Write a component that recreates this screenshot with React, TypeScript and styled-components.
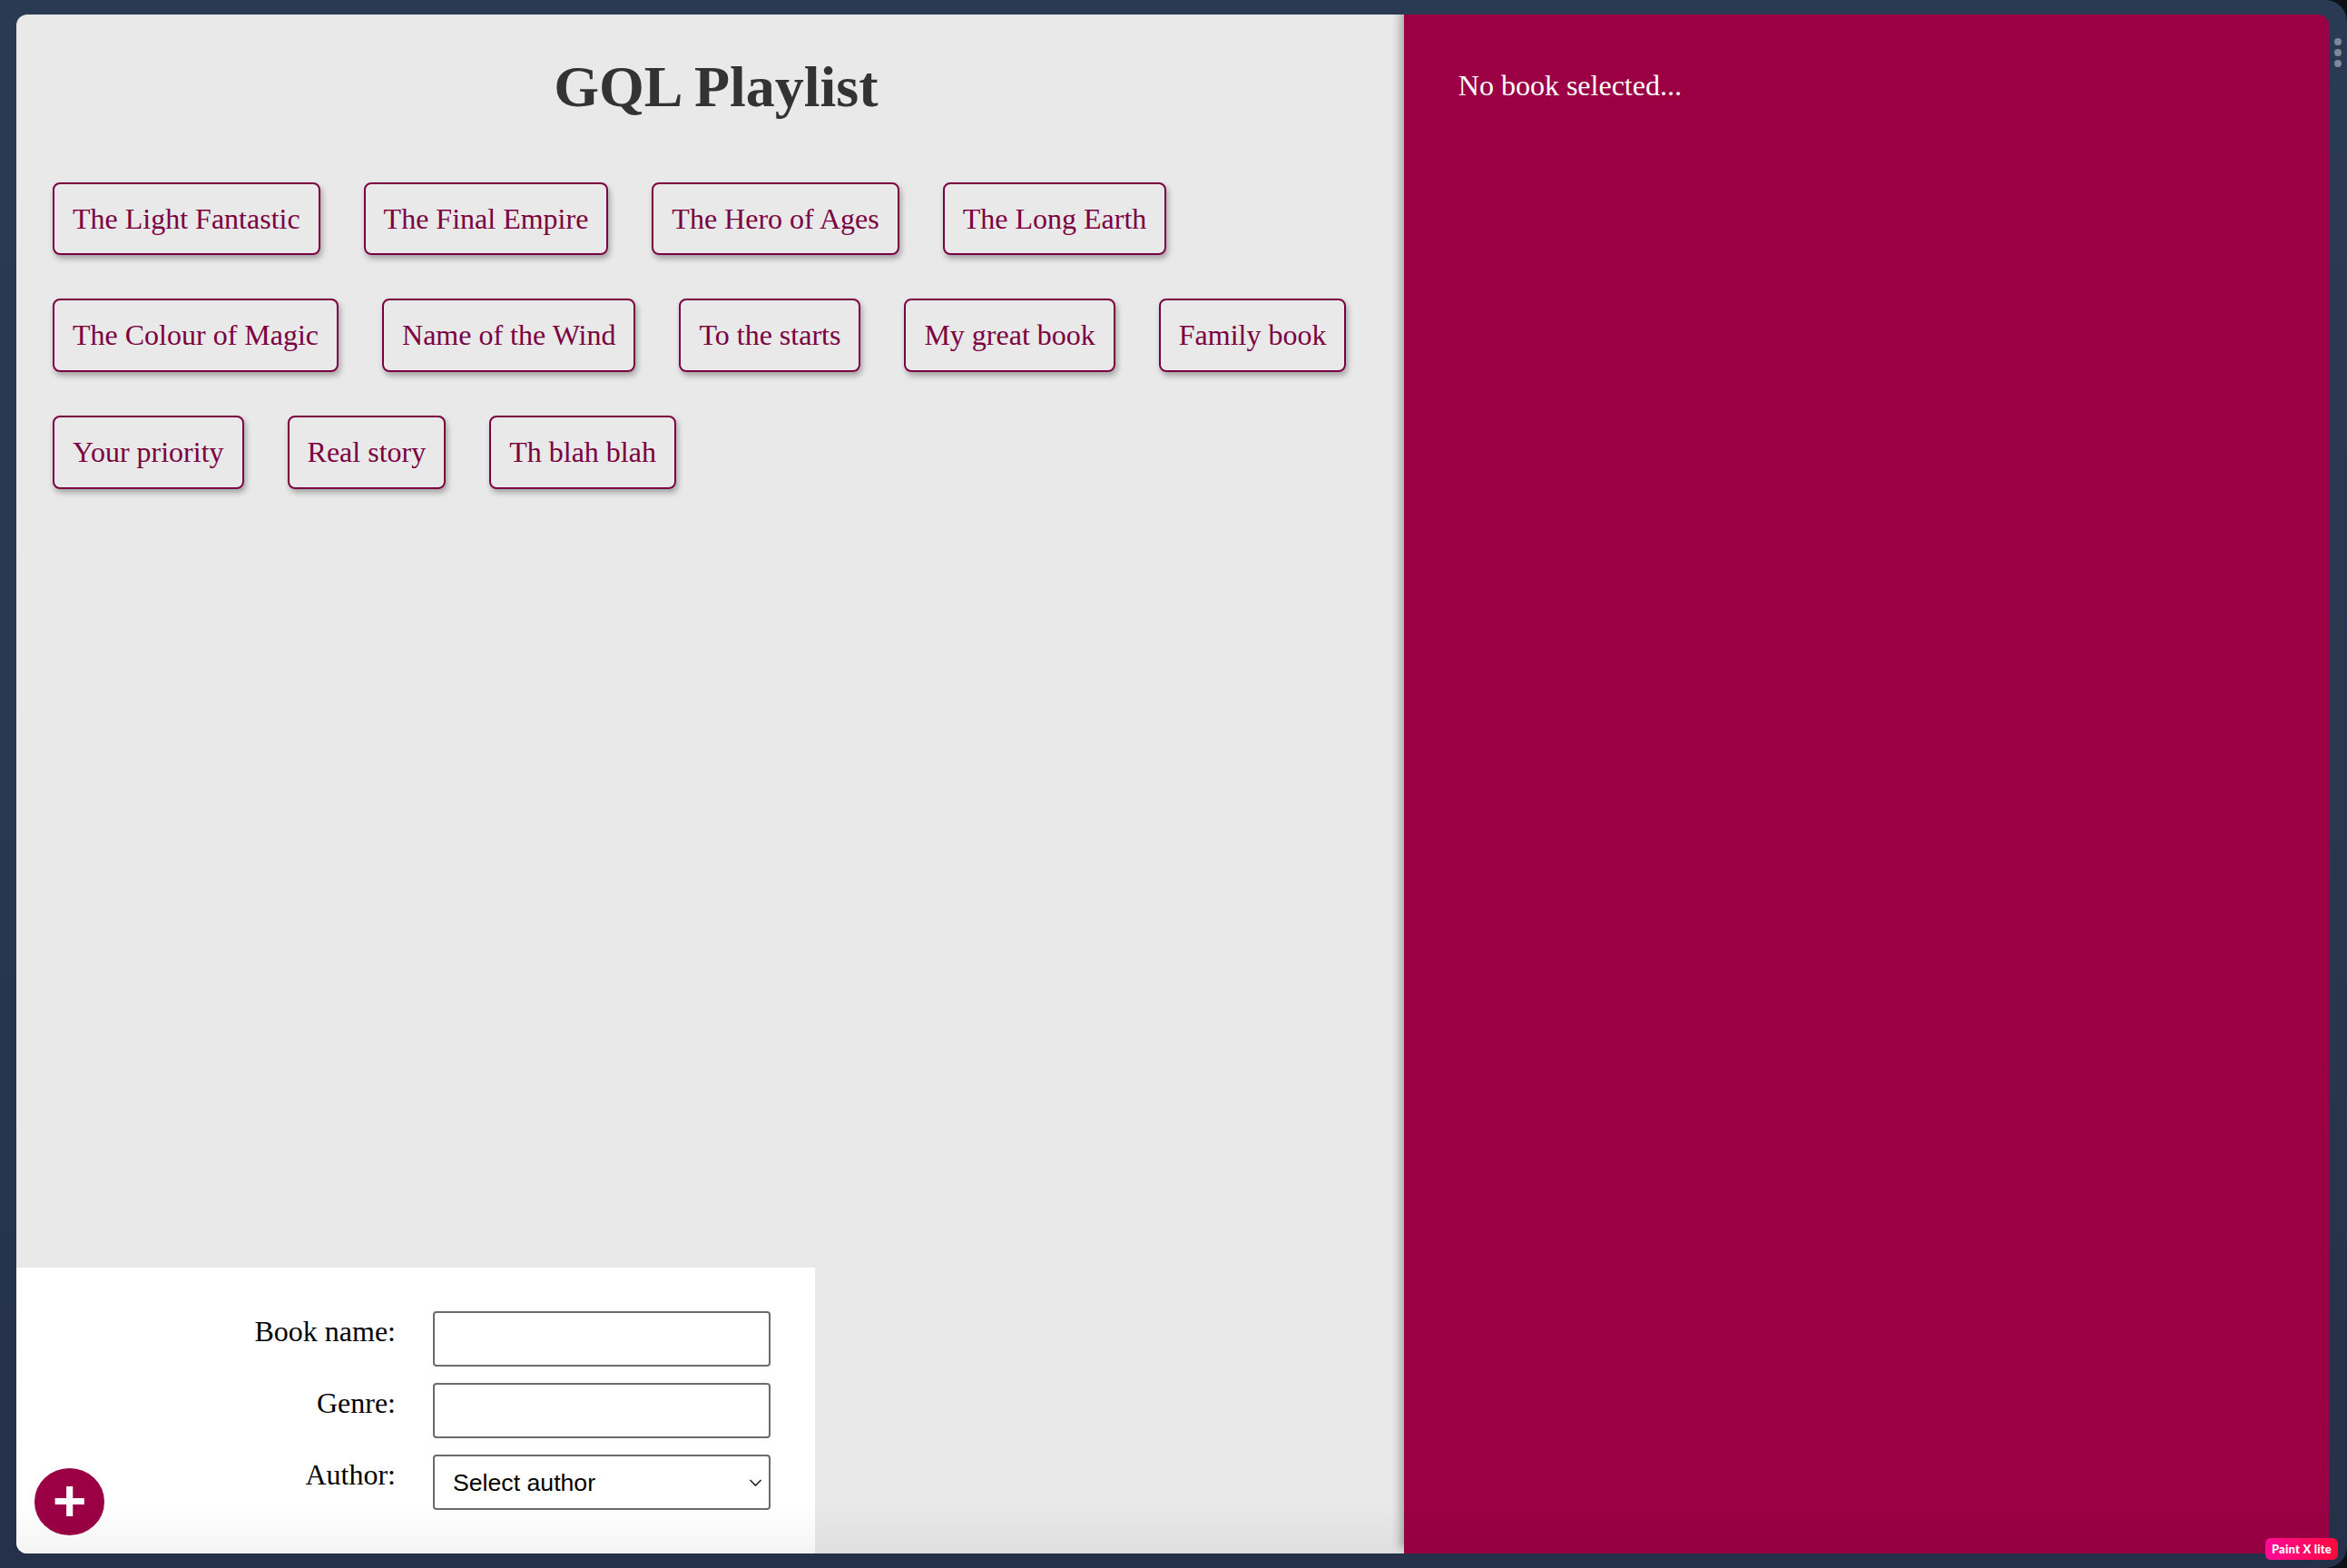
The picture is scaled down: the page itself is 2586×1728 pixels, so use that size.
import React from "react";
import styled, { createGlobalStyle } from "styled-components";

const GlobalStyle = createGlobalStyle`
  html, body {
    margin: 0;
    padding: 0;
    background: #0d1118;
  }
  body {
    font-family: "Liberation Serif", "Times New Roman", serif;
  }
  *, *::before, *::after {
    box-sizing: border-box;
  }
`;

const Frame = styled.div`
  position: relative;
  width: 2586px;
  height: 1728px;
  display: flex;
  padding: 16px 0 16px 18px;
  background: linear-gradient(180deg, #2b3a53 0%, #28364e 60%, #243148 100%);
  border-radius: 0 24px 24px 0;
  overflow: hidden;
`;

const Window = styled.div`
  position: relative;
  width: 2548px;
  height: 1696px;
  flex: none;
  display: flex;
  border-radius: 12px;
  overflow: hidden;

  &::after {
    content: "";
    position: absolute;
    left: 0;
    right: 0;
    bottom: 0;
    height: 56px;
    background: linear-gradient(180deg, rgba(0, 0, 0, 0), rgba(0, 0, 0, 0.045));
    pointer-events: none;
  }
`;

const SideStrip = styled.div`
  flex: 1;
  display: flex;
  flex-direction: column;
  align-items: center;
  padding-top: 26px;
  gap: 4px;
`;

const Dot = styled.span`
  width: 8px;
  height: 8px;
  border-radius: 50%;
  background: #7d889a;
`;

const LeftPanel = styled.main`
  width: 60%;
  display: flex;
  flex-direction: column;
  background: #e9e9e9;
`;

const Content = styled.div`
  padding: 0 3px 0 16px;
`;

const Title = styled.h1`
  margin: 42.5px 0 0;
  font-size: 64px;
  line-height: 73.5px;
  font-weight: 700;
  color: #333333;
  text-align: center;
`;

const BookList = styled.ul`
  list-style: none;
  margin: 68.5px 0 0;
  padding: 0 0 0 24px;
  display: flex;
  flex-wrap: wrap;
  gap: 48px 48px;
`;

const BookItem = styled.li`
  padding: 20px;
  border: 2px solid #7a0040;
  border-radius: 8px;
  box-shadow: 2px 4px 6px rgba(0, 0, 0, 0.3);
  color: #7a0040;
  font-size: 32px;
  line-height: 36.8px;
  cursor: pointer;
  white-space: nowrap;
`;

const AddForm = styled.form`
  position: relative;
  margin-top: auto;
  width: 880px;
  padding: 40px;
  background: #ffffff;
  display: flex;
  flex-direction: column;
  gap: 2px;
`;

const Field = styled.div`
  display: grid;
  grid-template-columns: 1fr 1fr;
  column-gap: 20px;
`;

const Label = styled.label`
  text-align: right;
  padding: 12px;
  font-size: 32px;
  line-height: 36.8px;
  color: #000000;
`;

const TextInput = styled.input`
  margin: 8px 9px;
  height: 61px;
  padding: 12px;
  border: 2px solid #6b6b6b;
  border-radius: 4px;
  font: 26.67px "Liberation Sans", Arial, sans-serif;
  background: #ffffff;
  outline: none;
`;

const SelectWrap = styled.div`
  position: relative;
  margin: 8px 9px;
`;

const Select = styled.select`
  width: 100%;
  height: 61px;
  appearance: none;
  -webkit-appearance: none;
  padding: 0 40px 0 20px;
  border: 2px solid #6b6b6b;
  border-radius: 4px;
  font: 26.67px "Liberation Sans", Arial, sans-serif;
  color: #000000;
  background: #ffffff;
  outline: none;
`;

const Chevron = styled.svg`
  position: absolute;
  right: 9px;
  top: 50%;
  transform: translateY(-50%);
  pointer-events: none;
`;

const AddButton = styled.button`
  position: absolute;
  left: 20px;
  bottom: 20px;
  padding: 0 20px;
  border: 0;
  border-radius: 50%;
  background: #9b0045;
  color: #ffffff;
  font: 700 64px/1.149 "Liberation Sans", Arial, sans-serif;
  cursor: pointer;
`;

const Details = styled.aside`
  width: 40%;
  background: #9b0045;
  padding: 60px;
  color: #ffffff;
  font-size: 32px;
  line-height: 36.8px;
  box-shadow: -4px -6px 10px rgba(0, 0, 0, 0.3);
`;

const Badge = styled.div`
  position: absolute;
  right: 10px;
  bottom: 9px;
  width: 80px;
  height: 24px;
  border-radius: 6px;
  background: linear-gradient(90deg, #ff0a98 0%, #ff0a3c 100%);
  color: #ffffff;
  font: 900 13px/24px Lato, "Liberation Sans", sans-serif;
  text-align: center;
  letter-spacing: 0.2px;
`;

const books = [
  "The Light Fantastic",
  "The Final Empire",
  "The Hero of Ages",
  "The Long Earth",
  "The Colour of Magic",
  "Name of the Wind",
  "To the starts",
  "My great book",
  "Family book",
  "Your priority",
  "Real story",
  "Th blah blah",
];

export default function App() {
  return (
    <>
      <GlobalStyle />
      <Frame>
        <Window>
          <LeftPanel>
            <Content>
              <Title>GQL Playlist</Title>
              <BookList>
                {books.map((b) => (
                  <BookItem key={b}>{b}</BookItem>
                ))}
              </BookList>
            </Content>
            <AddForm onSubmit={(e) => e.preventDefault()}>
              <Field>
                <Label>Book name:</Label>
                <TextInput type="text" />
              </Field>
              <Field>
                <Label>Genre:</Label>
                <TextInput type="text" />
              </Field>
              <Field>
                <Label>Author:</Label>
                <SelectWrap>
                  <Select defaultValue="">
                    <option value="">Select author</option>
                  </Select>
                  <Chevron width="15" height="10" viewBox="0 0 15 10">
                    <path d="M1.5 2 L7.5 8 L13.5 2" fill="none" stroke="#222" strokeWidth="1.6" />
                  </Chevron>
                </SelectWrap>
              </Field>
              <AddButton type="submit">+</AddButton>
            </AddForm>
          </LeftPanel>
          <Details>No book selected...</Details>
        </Window>
        <SideStrip>
          <Dot />
          <Dot />
          <Dot />
        </SideStrip>
        <Badge>Paint X lite</Badge>
      </Frame>
    </>
  );
}
